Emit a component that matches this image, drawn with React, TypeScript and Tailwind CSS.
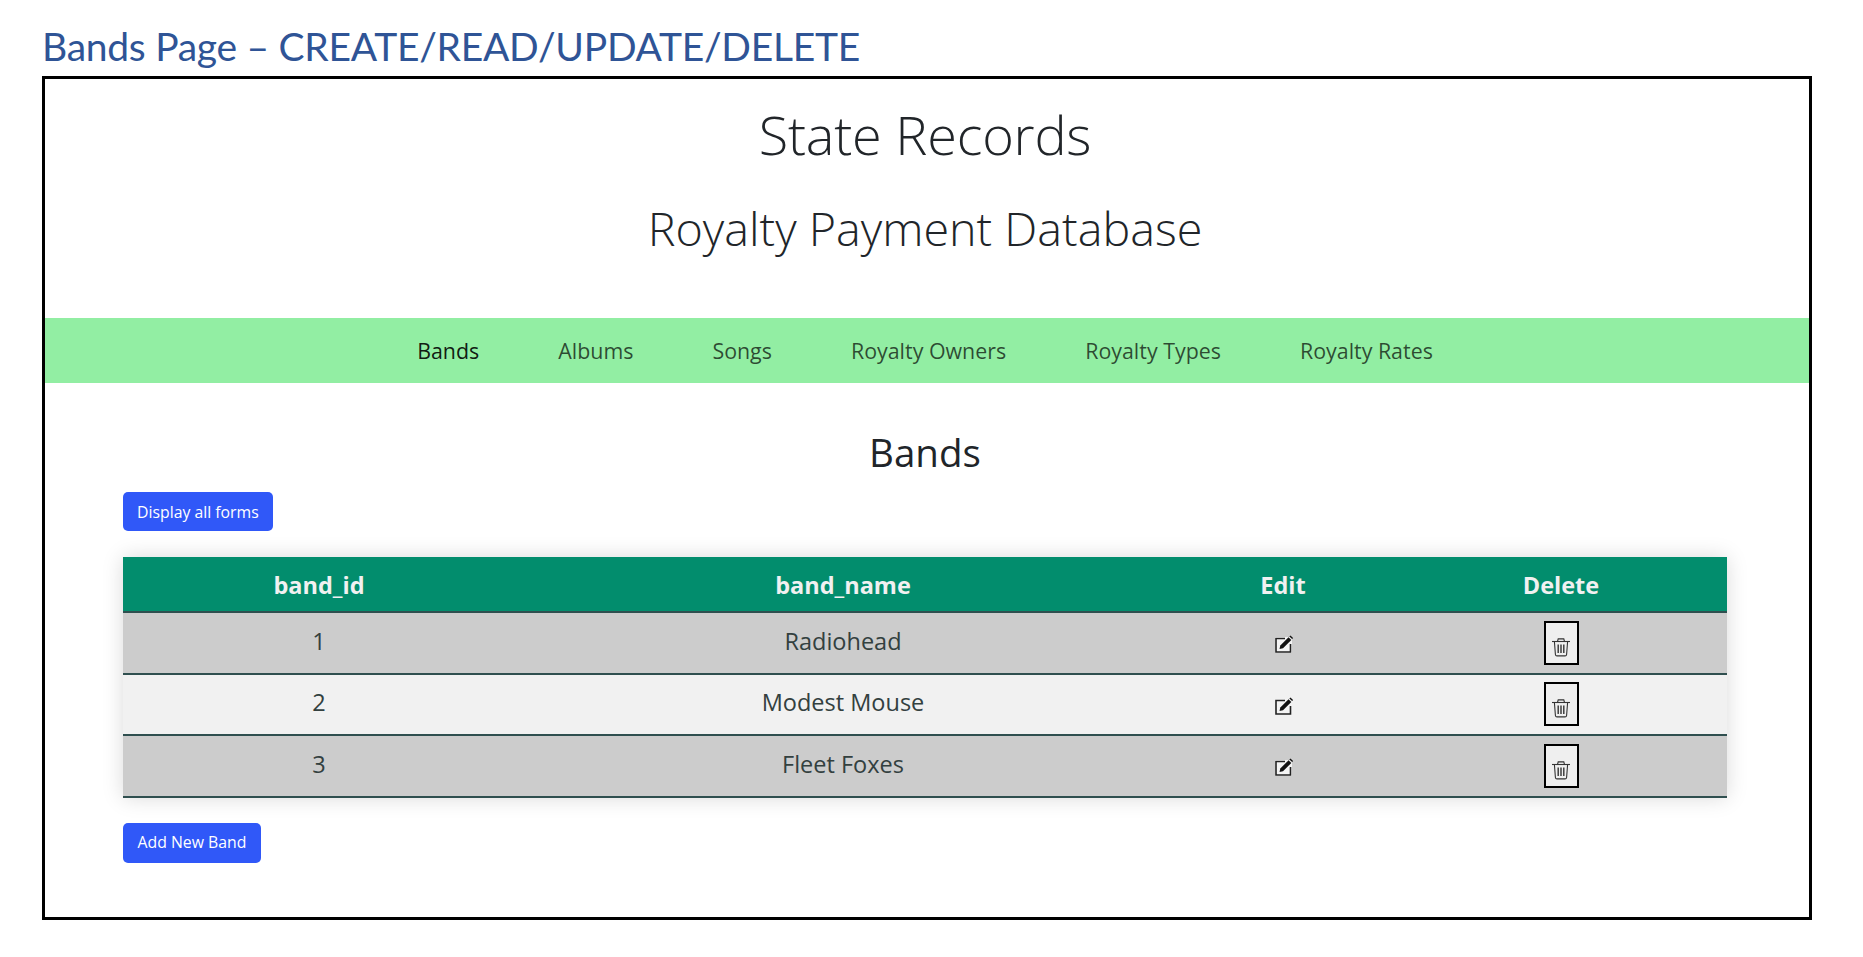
const navLinks = ["Bands", "Albums", "Songs", "Royalty Owners", "Royalty Types", "Royalty Rates"]

const bands = [
  { id: 1, name: "Radiohead" },
  { id: 2, name: "Modest Mouse" },
  { id: 3, name: "Fleet Foxes" },
]

function EditIcon() {
  return (
    <svg viewBox="0 0 20 20" className="h-5 w-5">
      <rect x="1" y="3" width="17" height="16" fill="#f4f4f4" />
      <path d="M11 4.5H2v13.5h14.5V10" fill="none" stroke="#222" strokeWidth="1.6" />
      <path d="M5.5 15l.8-3.4L14.6 3.2l2.7 2.7-8.3 8.3z" fill="#111" />
      <path d="M15.4 2.4l1-1 2.7 2.7-1 1z" fill="#111" />
    </svg>
  )
}

function TrashIcon() {
  return (
    <svg viewBox="0 0 20 20" fill="none" stroke="#333" strokeWidth="1.1" className="h-5 w-5">
      <path d="M1 4.5h18" />
      <path d="M6.5 4.5l.7-2.6h5.6l.7 2.6" />
      <path d="M3.4 4.5l1 13a1.6 1.6 0 0 0 1.6 1.4h8a1.6 1.6 0 0 0 1.6-1.4l1-13" />
      <path d="M7.2 7.5v8.5M10 7.5v8.5M12.8 7.5v8.5" strokeWidth="1.4" />
    </svg>
  )
}

export default function App() {
  return (
    <div className="h-[957px] overflow-hidden bg-white pl-[42px] pr-[51px] font-['Open_Sans',sans-serif] text-[#212529]">
      <h2 className="flex h-[76px] items-end pb-[4px] font-['Lato',sans-serif] text-[39px] leading-[52px] tracking-[-0.27px] text-[#2f5496]">
        Bands Page – CREATE/READ/UPDATE/DELETE
      </h2>
      <div className="h-[844px] border-[3px] border-black">
        <header className="flex h-[239px] flex-col items-center pr-[4px] font-light">
          <h1 className="mt-[23px] text-[54px] leading-[64px] tracking-[-0.2px]">State Records</h1>
          <h2 className="mt-[31px] text-[46.7px] leading-[62px]">Royalty Payment Database</h2>
        </header>
        <nav className="flex h-[65px] items-center justify-center gap-[79px] bg-[#92eea3] pr-[4px] pt-[2px] text-[21.4px] text-black/70">
          {navLinks.map((link, i) => (
            <a key={link} href="#" className={i === 0 ? "text-black/90" : ""}>
              {link}
            </a>
          ))}
        </nav>
        <main className="pl-[78px] pr-[82px]">
          <h2 className="mt-[43px] text-center text-[38.5px] leading-[52px]">Bands</h2>
          <button className="mt-[14px] block h-[39px] rounded-[5px] bg-[#3058f8] px-[14px] pt-[2px] text-[15.8px] text-white">
            Display all forms
          </button>
          <table className="mt-[26px] w-full table-fixed border-collapse text-center text-[23.5px] shadow-[0_0_20px_rgba(0,0,0,0.15)]">
            <colgroup>
              <col className="w-[392px]" />
              <col className="w-[656px]" />
              <col className="w-[224px]" />
              <col />
            </colgroup>
            <thead>
              <tr className="h-[55px] border-b-2 border-[#2f4f4f] bg-[#028d6d] font-bold text-[#f1f1f1]">
                <th className="pt-[4px]">band_id</th>
                <th className="pt-[4px]">band_name</th>
                <th className="pt-[4px]">Edit</th>
                <th className="pt-[4px]">Delete</th>
              </tr>
            </thead>
            <tbody className="text-[#33403f]">
              {bands.map(band => (
                <tr
                  key={band.id}
                  className="h-[61.5px] border-b-2 border-[#2f4f4f] odd:bg-[#cccccc] even:bg-[#f1f1f1]"
                >
                  <td className="pb-[3px]">{band.id}</td>
                  <td className="pb-[3px]">{band.name}</td>
                  <td>
                    <a href="#" className="inline-block translate-x-[1px] translate-y-[3px]">
                      <EditIcon />
                    </a>
                  </td>
                  <td>
                    <button className="inline-flex h-[44px] w-[35px] items-end justify-center border-2 border-black bg-[#efefef] pb-[6px] align-middle">
                      <TrashIcon />
                    </button>
                  </td>
                </tr>
              ))}
            </tbody>
          </table>
          <button className="mt-[25px] block h-[40px] rounded-[5px] bg-[#3058f8] px-[14.5px] text-[15.8px] text-white">
            Add New Band
          </button>
        </main>
      </div>
    </div>
  )
}
